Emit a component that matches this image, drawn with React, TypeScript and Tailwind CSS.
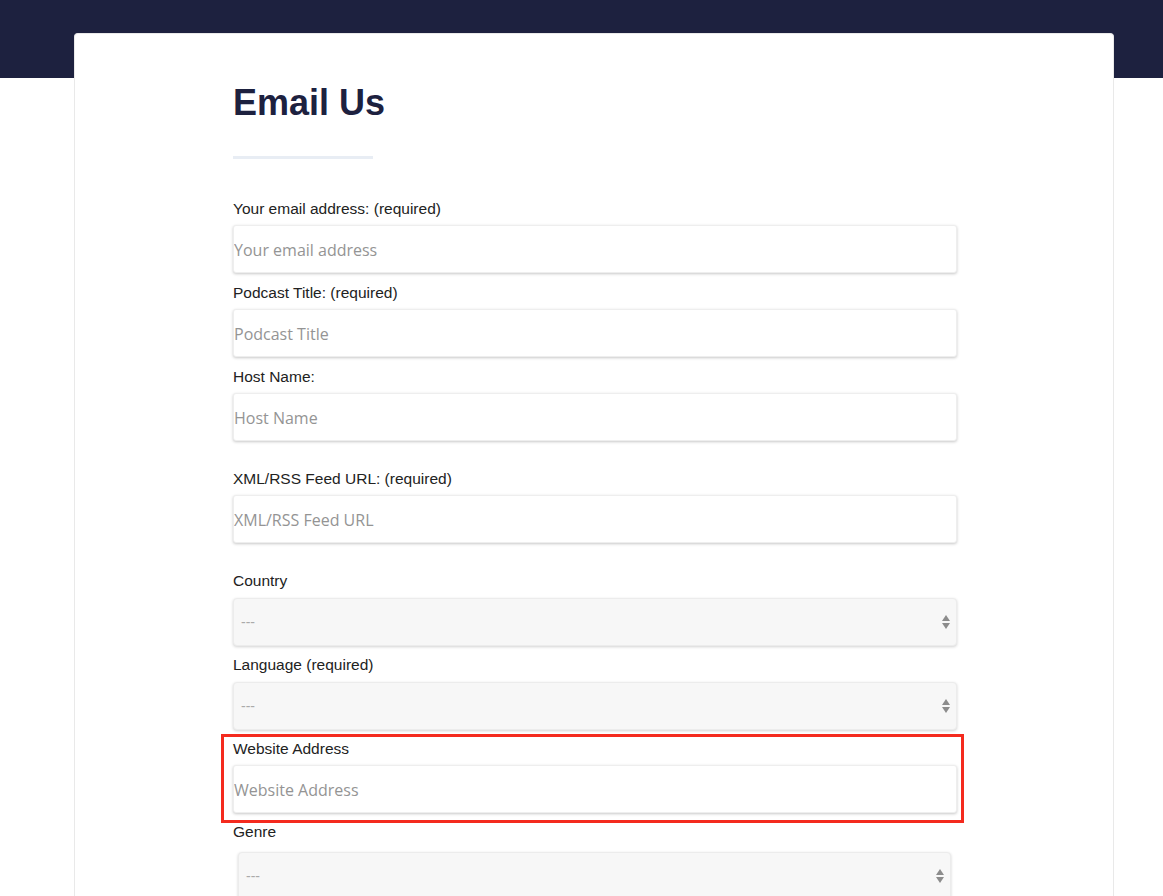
import React from 'react';

const labelCls = "block h-[20px] leading-[20px] text-[15.5px] text-[#222] font-['Liberation_Sans',Arial,sans-serif]";
const inputCls =
  "block w-full h-[48px] pl-[0px] pt-[2px] bg-white border border-[#eeeeee] rounded-[3px] shadow-[0_1px_3px_rgba(0,0,0,0.22)] text-[16px] text-[#333] font-['Open_Sans',sans-serif] placeholder:text-[#949494] outline-none";

const Arrows = () => (
  <svg width="10" height="16" viewBox="0 0 10 16" className="shrink-0">
    <path d="M5 1 L9 7 L1 7 Z" fill="#8c8c8c" />
    <path d="M1 9 L9 9 L5 15 Z" fill="#8c8c8c" />
  </svg>
);

const FakeSelect = ({ className = '' }: { className?: string }) => (
  <div
    className={`flex items-center justify-between h-[48px] pl-[7px] pr-[5px] bg-[#f7f7f7] border border-[#ececec] rounded-[4px] shadow-[0_1px_3px_rgba(0,0,0,0.18)] ${className}`}
  >
    <span className="text-[14px] text-[#aaaaaa] font-['Liberation_Sans',Arial,sans-serif]">---</span>
    <Arrows />
  </div>
);

const Field = ({ label, placeholder }: { label: string; placeholder: string }) => (
  <div>
    <label className={labelCls}>{label}</label>
    <input className={`mt-[6px] ${inputCls}`} placeholder={placeholder} />
  </div>
);

export default function App() {
  return (
    <div className="min-h-screen bg-[linear-gradient(#1d213f_0,#1d213f_78px,#ffffff_78px)] pt-[33px] overflow-hidden">
      <div className="ml-[74px] w-[1040px] min-h-[900px] bg-white border border-b-0 border-[#e9e9e9] rounded-t-[4px] pl-[158px] pt-[47px]">
        <div className="w-[724px]">
          <h1 className="text-[36px] leading-[1.2] font-bold text-[#1d213f] font-['Liberation_Sans',Arial,sans-serif]">
            Email Us
          </h1>
          <div className="mt-[32px] h-[3px] w-[140px] bg-[#e8edf4]" />

          <div className="mt-[40px] flex flex-col">
            <Field label="Your email address: (required)" placeholder="Your email address" />
            <div className="mt-[10px]">
              <Field label="Podcast Title: (required)" placeholder="Podcast Title" />
            </div>
            <div className="mt-[10px]">
              <Field label="Host Name:" placeholder="Host Name" />
            </div>
            <div className="mt-[28px]">
              <Field label="XML/RSS Feed URL: (required)" placeholder="XML/RSS Feed URL" />
            </div>

            <div className="mt-[28px]">
              <label className={labelCls}>Country</label>
              <FakeSelect className="mt-[7px]" />
            </div>
            <div className="mt-[9px]">
              <label className={labelCls}>Language (required)</label>
              <FakeSelect className="mt-[7px]" />
            </div>

            {/* highlighted field */}
            <div className="mt-[4px] -ml-[12px] -mr-[7px] pl-[9px] pr-[4px] pt-[2px] pb-[7px] border-[3px] border-[#f42a1e]">
              <Field label="Website Address" placeholder="Website Address" />
            </div>

            <div className="-mt-[1px]">
              <label className={labelCls}>Genre</label>
              <FakeSelect className="mt-[10px] ml-[5px] mr-[6px]" />
            </div>
          </div>
        </div>
      </div>
    </div>
  );
}
